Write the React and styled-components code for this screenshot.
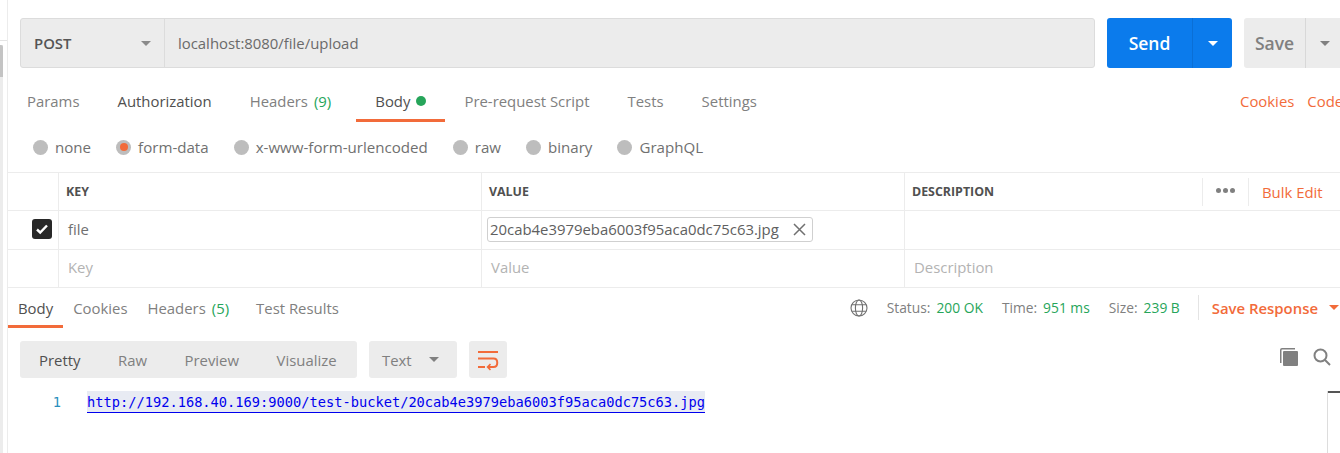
import React from "react";
import styled, { createGlobalStyle } from "styled-components";

const GlobalStyle = createGlobalStyle`
  html, body {
    margin: 0;
    padding: 0;
    background: #fff;
    overflow: hidden;
  }
  * { box-sizing: border-box; }
`;

const ORANGE = "#f26b3a";
const GREEN = "#26a55a";

const Page = styled.div`
  width: 1340px;
  height: 453px;
  display: flex;
  overflow: hidden;
  font-family: "Open Sans", sans-serif;
  font-size: 14.9px;
  color: #808080;
  background: #fff;
`;

const SideRail = styled.div`
  width: 8px;
  flex: none;
  padding-top: 40px;
  border-right: 1px solid #ececec;
`;

const RailTrack = styled.div`
  height: 100%;
  border-top: 1px solid #e4e4e4;
  padding-top: 4px;
`;

const RailBar = styled.div`
  width: 3px;
  height: 100%;
  background: #ececec;
`;

const RailThumb = styled.div`
  height: 32px;
  background: #c4c4c4;
  border-top-right-radius: 2px;
`;

const Main = styled.div`
  flex: 1;
  min-width: 0;
  display: flex;
  flex-direction: column;
`;

const UrlRow = styled.div`
  display: flex;
  gap: 12px;
  padding: 18px 0 0 12px;
  height: 84px;
`;

const UrlBox = styled.div`
  width: 1075px;
  flex: none;
  height: 50px;
  display: flex;
  background: #ececec;
  border: 1px solid #dcdcdc;
  border-radius: 3px;
`;

const Method = styled.div`
  width: 144px;
  flex: none;
  display: flex;
  align-items: center;
  justify-content: space-between;
  padding: 0 13px;
  font-weight: 600;
  color: #555;
  border-right: 1px solid #dcdcdc;
`;

const UrlText = styled.div`
  display: flex;
  align-items: center;
  padding-left: 13px;
  color: #6a6a6a;
`;

const Caret = styled.span`
  width: 0;
  height: 0;
  flex: none;
  border-left: 5px solid transparent;
  border-right: 5px solid transparent;
  border-top: 5px solid ${(p) => p.$color || "#808080"};
`;

const SplitButton = styled.div`
  display: flex;
  height: 50px;
  width: ${(p) => p.$width}px;
  flex: none;
  border-radius: 3px;
  background: ${(p) => p.$bg};
  color: ${(p) => p.$fg};
  font-size: 17.5px;
  font-weight: 600;
`;

const SplitMain = styled.div`
  width: ${(p) => p.$width}px;
  display: flex;
  align-items: center;
  justify-content: center;
  border-right: 1px solid ${(p) => p.$line};
`;

const SplitArrow = styled.div`
  flex: 1;
  display: flex;
  align-items: center;
  justify-content: center;
`;

const TabsRow = styled.div`
  display: flex;
  align-items: stretch;
  height: 38px;
`;

const Tab = styled.div`
  display: flex;
  align-items: center;
  gap: 6px;
  padding: 0 ${(p) => p.$pad || 19}px ${(p) => p.$lift || 0}px;
  margin-right: ${(p) => p.$extra || 0}px;
  white-space: nowrap;
  color: ${(p) => (p.$active || p.$dark ? "#505050" : "#808080")};
  border-bottom: 3px solid ${(p) => (p.$active ? ORANGE : "transparent")};
`;

const Green = styled.span`
  color: ${GREEN};
`;

const Dot = styled.span`
  width: 10px;
  height: 10px;
  border-radius: 50%;
  background: ${GREEN};
`;

const TabLinks = styled.div`
  margin-left: auto;
  display: flex;
  gap: 13px;
  align-items: center;
  padding-bottom: 5px;
  color: ${ORANGE};
  width: 100px;
  flex: none;
  white-space: nowrap;
  overflow: hidden;
`;

const ModeRow = styled.div`
  display: flex;
  align-items: center;
  gap: 25px;
  height: 50px;
  padding-left: 25px;
  font-size: 15.1px;
`;

const Mode = styled.div`
  display: flex;
  align-items: center;
  gap: 7px;
  white-space: nowrap;
  color: #707070;
`;

const Radio = styled.span`
  width: 15px;
  height: 15px;
  border-radius: 50%;
  background: #bdbdbd;
  display: flex;
  align-items: center;
  justify-content: center;
  &::after {
    content: "";
    display: ${(p) => (p.$on ? "block" : "none")};
    width: 8px;
    height: 8px;
    border-radius: 50%;
    background: ${ORANGE};
  }
`;

const Table = styled.div`
  border-top: 1px solid #ececec;
  display: grid;
  grid-template-columns: 51px 423px 423px 1fr;
`;

const Cell = styled.div`
  height: ${(p) => p.$h || 39}px;
  display: flex;
  align-items: center;
  padding-left: ${(p) => p.$pad ?? 9}px;
  padding-bottom: ${(p) => p.$lift || 0}px;
  border-bottom: 1px solid #ececec;
  border-right: 1px solid #ececec;
  white-space: nowrap;
  min-width: 0;
  color: ${(p) => (p.$muted ? "#b3b3b3" : "#707070")};
`;

const LastCell = styled(Cell)`
  border-right: none;
`;

const HeadLabel = styled.span`
  font-size: 12.4px;
  font-weight: 700;
  color: #505050;
`;

const HeadActions = styled.div`
  margin-left: auto;
  display: flex;
  align-items: center;
  height: 28px;
`;

const Dots = styled.div`
  width: 47px;
  height: 100%;
  display: flex;
  align-items: center;
  justify-content: center;
  gap: 2px;
  border-left: 1px solid #ececec;
  border-right: 1px solid #ececec;
  padding-bottom: 2px;
`;

const DotMark = styled.span`
  width: 5px;
  height: 5px;
  border-radius: 50%;
  background: #808080;
`;

const BulkEdit = styled.div`
  width: 91px;
  padding-left: 13px;
  color: ${ORANGE};
`;

const CheckCell = styled(Cell)`
  justify-content: flex-end;
  padding-left: 0;
  padding-right: 6px;
`;

const CheckBox = styled.span`
  width: 20px;
  height: 20px;
  border-radius: 3px;
  background: #282828;
  display: flex;
  align-items: center;
  justify-content: center;
`;

const FileChip = styled.div`
  height: 25px;
  width: 326px;
  flex: none;
  display: flex;
  align-items: center;
  justify-content: space-between;
  padding: 0 6px 0 2px;
  border: 1px solid #d0d0d0;
  border-radius: 3px;
  color: #606060;
`;

const ResponseBar = styled.div`
  display: flex;
  align-items: stretch;
  height: 40px;
  padding-top: 2px;
`;

const StatusGroup = styled.div`
  margin-left: auto;
  display: flex;
  align-items: center;
  padding-bottom: 3px;
  font-size: 13.8px;
  white-space: nowrap;
`;

const Globe = styled.svg`
  width: 18px;
  height: 18px;
  margin-right: 19px;
`;

const Stat = styled.span`
  margin-right: ${(p) => p.$gap || 19}px;
  display: flex;
  gap: 6px;
`;

const SaveResponse = styled.div`
  height: 25px;
  display: flex;
  align-items: center;
  gap: 11px;
  padding: 0 1px 0 13px;
  border-left: 1px solid #e4e4e4;
  color: ${ORANGE};
  font-size: 14.9px;
  font-weight: 600;
`;

const ViewRow = styled.div`
  display: flex;
  align-items: flex-start;
  gap: 12px;
  padding: 13px 0 0 12px;
  height: 61px;
`;

const ViewTabs = styled.div`
  display: flex;
  align-items: center;
  width: 337px;
  height: 37px;
  padding-left: 19px;
  gap: 37.5px;
  background: #ececec;
  border-radius: 3px;
`;

const ViewTab = styled.span`
  color: ${(p) => (p.$active ? "#505050" : "#808080")};
`;

const FormatSelect = styled.div`
  width: 88px;
  height: 37px;
  display: flex;
  align-items: center;
  justify-content: space-between;
  padding: 0 18px 0 13px;
  background: #ececec;
  border-radius: 3px;
`;

const WrapButton = styled.div`
  width: 38px;
  height: 37px;
  display: flex;
  align-items: center;
  justify-content: center;
  background: #ececec;
  border-radius: 3px;
`;

const ViewIcons = styled.div`
  margin-left: auto;
  display: flex;
  align-items: center;
  gap: 15px;
  padding: 7px 9px 0 0;
`;

const CodeArea = styled.div`
  flex: 1;
  display: flex;
  position: relative;
`;

const LineNo = styled.div`
  width: 58px;
  padding: 4px 5px 0 0;
  text-align: right;
  font-family: "DejaVu Sans Mono", monospace;
  font-size: 13.7px;
  line-height: 18px;
  color: #2a8fbd;
`;

const CodeLink = styled.a`
  display: block;
  align-self: flex-start;
  margin: 2px 0 0 21px;
  padding-top: 2px;
  height: 22px;
  font-family: "DejaVu Sans Mono", monospace;
  font-size: 13.7px;
  line-height: 18px;
  color: #0000ee;
  background: #e8ebf3;
  border-bottom: 1px solid #0000ee;
  white-space: nowrap;
`;

const MiniMap = styled.div`
  position: absolute;
  right: 0;
  top: 2px;
  bottom: 0;
  width: 13px;
  border-left: 1px solid #ddd;
  &::before {
    content: "";
    display: block;
    height: 2px;
    background: #555;
  }
`;

export default function App() {
  return (
    <Page>
      <GlobalStyle />
      <SideRail>
        <RailTrack>
          <RailBar>
            <RailThumb />
          </RailBar>
        </RailTrack>
      </SideRail>
      <Main>
        <UrlRow>
          <UrlBox>
            <Method>
              POST
              <Caret $color="#8a8a8a" />
            </Method>
            <UrlText>localhost:8080/file/upload</UrlText>
          </UrlBox>
          <SplitButton $width={125} $bg="#0b7bec" $fg="#fff">
            <SplitMain $width={86} $line="#0a6fd6">Send</SplitMain>
            <SplitArrow>
              <Caret $color="#fff" />
            </SplitArrow>
          </SplitButton>
          <SplitButton $width={100} $bg="#ececec" $fg="#808080">
            <SplitMain $width={62} $line="#d8d8d8">Save</SplitMain>
            <SplitArrow>
              <Caret $color="#808080" />
            </SplitArrow>
          </SplitButton>
        </UrlRow>

        <TabsRow>
          <Tab $lift={2}>Params</Tab>
          <Tab $lift={2} $dark>Authorization</Tab>
          <Tab $lift={2} $extra={6}>
            Headers <Green>(9)</Green>
          </Tab>
          <Tab $lift={2} $active>
            Body <Dot />
          </Tab>
          <Tab $lift={2}>Pre-request Script</Tab>
          <Tab $lift={2}>Tests</Tab>
          <Tab $lift={2}>Settings</Tab>
          <TabLinks>
            <span>Cookies</span>
            <span>Code</span>
          </TabLinks>
        </TabsRow>

        <ModeRow>
          <Mode><Radio />none</Mode>
          <Mode><Radio $on />form-data</Mode>
          <Mode><Radio />x-www-form-urlencoded</Mode>
          <Mode><Radio />raw</Mode>
          <Mode><Radio />binary</Mode>
          <Mode><Radio />GraphQL</Mode>
        </ModeRow>

        <Table>
          <Cell $h={38} />
          <Cell $h={38} $pad={7}><HeadLabel>KEY</HeadLabel></Cell>
          <Cell $h={38} $pad={7}><HeadLabel>VALUE</HeadLabel></Cell>
          <LastCell $h={38} $pad={7}>
            <HeadLabel>DESCRIPTION</HeadLabel>
            <HeadActions>
              <Dots><DotMark /><DotMark /><DotMark /></Dots>
              <BulkEdit>Bulk Edit</BulkEdit>
            </HeadActions>
          </LastCell>

          <CheckCell $lift={2}>
            <CheckBox>
              <svg width="14" height="12" viewBox="0 0 14 12" fill="none">
                <path d="M2 6.5 L5.2 9.5 L12 2.5" stroke="#fff" strokeWidth="2.4" />
              </svg>
            </CheckBox>
          </CheckCell>
          <Cell $lift={2}>file</Cell>
          <Cell $pad={5} $lift={2}>
            <FileChip>
              20cab4e3979eba6003f95aca0dc75c63.jpg
              <svg width="13" height="13" viewBox="0 0 13 13" fill="none">
                <path d="M1 1 L12 12 M12 1 L1 12" stroke="#707070" strokeWidth="1.5" />
              </svg>
            </FileChip>
          </Cell>
          <LastCell />

          <Cell $h={38} />
          <Cell $h={38} $lift={4} $muted>Key</Cell>
          <Cell $h={38} $lift={4} $muted>Value</Cell>
          <LastCell $h={38} $lift={4} $muted>Description</LastCell>
        </Table>

        <ResponseBar>
          <Tab $active $pad={10}>Body</Tab>
          <Tab $pad={10}>Cookies</Tab>
          <Tab $pad={10} $extra={1}>
            Headers <Green>(5)</Green>
          </Tab>
          <Tab $pad={16}>Test Results</Tab>
          <StatusGroup>
            <Globe viewBox="0 0 18 18" fill="none" stroke="#707070" strokeWidth="1.1">
              <circle cx="9" cy="9" r="8" />
              <ellipse cx="9" cy="9" rx="3.6" ry="8" />
              <path d="M1.8 5.8 H16.2 M1.8 12.2 H16.2" />
            </Globe>
            <Stat>Status: <Green>200 OK</Green></Stat>
            <Stat>Time: <Green>951 ms</Green></Stat>
            <Stat $gap={18}>Size: <Green>239 B</Green></Stat>
            <SaveResponse>
              Save Response
              <Caret $color={ORANGE} />
            </SaveResponse>
          </StatusGroup>
        </ResponseBar>

        <ViewRow>
          <ViewTabs>
            <ViewTab $active>Pretty</ViewTab>
            <ViewTab>Raw</ViewTab>
            <ViewTab>Preview</ViewTab>
            <ViewTab>Visualize</ViewTab>
          </ViewTabs>
          <FormatSelect>
            Text
            <Caret $color="#808080" />
          </FormatSelect>
          <WrapButton>
            <svg width="20" height="18" viewBox="0 0 20 18" fill="none" stroke={ORANGE} strokeWidth="2" style={{ overflow: "visible" }}>
              <path d="M0 1 H20 M0 7.5 H15.5 C20.5 7.5 20.5 16 15.5 16 H10 M0 16 H7" />
              <path d="M12.5 13.2 L9.6 16 L12.5 18.8" strokeWidth="1.6" />
            </svg>
          </WrapButton>
          <ViewIcons>
            <svg width="18" height="18" viewBox="0 0 18 18" fill="#808080">
              <path d="M0 2 Q0 0 2 0 H15 V1.5 H2 Q1.5 1.5 1.5 2 V15 H0 Z" />
              <rect x="3" y="3" width="15" height="15" rx="1" />
            </svg>
            <svg width="18" height="18" viewBox="0 0 18 18" fill="none" stroke="#808080" strokeWidth="2">
              <circle cx="7.5" cy="7.5" r="6" />
              <path d="M12 12 L17 17" />
            </svg>
          </ViewIcons>
        </ViewRow>

        <CodeArea>
          <LineNo>1</LineNo>
          <CodeLink>http://192.168.40.169:9000/test-bucket/20cab4e3979eba6003f95aca0dc75c63.jpg</CodeLink>
          <MiniMap />
        </CodeArea>
      </Main>
    </Page>
  );
}
